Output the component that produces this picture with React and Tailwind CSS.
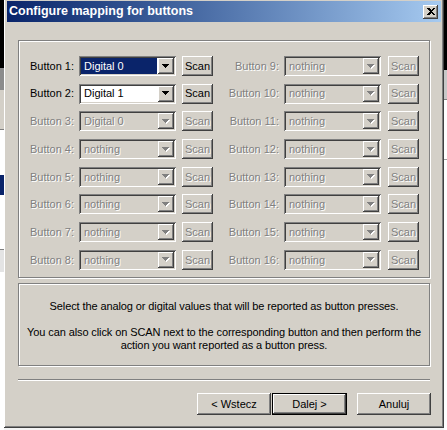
import React from "react";

// classic 3D edges
const raised =
  "shadow-[inset_-1px_-1px_0_#404040,inset_1px_1px_0_#ffffff,inset_-2px_-2px_0_#808080,inset_2px_2px_0_#d4d0c8]";
const sunken =
  "shadow-[inset_1px_1px_0_#808080,inset_-1px_-1px_0_#ffffff,inset_2px_2px_0_#404040,inset_-2px_-2px_0_#d4d0c8]";
const etched = "border border-[#808080] shadow-[inset_1px_1px_0_#ffffff,1px_1px_0_#ffffff]";
const grayText = "text-[#808080] [text-shadow:1px_1px_0_#ffffff]";

const left = [
  { n: 1, v: "Digital 0", on: true, sel: true },
  { n: 2, v: "Digital 1", on: true },
  { n: 3, v: "Digital 0" },
  { n: 4, v: "nothing" },
  { n: 5, v: "nothing" },
  { n: 6, v: "nothing" },
  { n: 7, v: "nothing" },
  { n: 8, v: "nothing" },
];
const right = [9, 10, 11, 12, 13, 14, 15, 16].map((n) => ({ n, v: "nothing" }));

const Arrow = ({ on }) => (
  <svg width="8" height="5" viewBox="0 0 8 5" shapeRendering="crispEdges" className="overflow-visible">
    {!on && <polygon points="1,1 8,1 4.5,5" fill="#ffffff" />}
    <polygon points="0,0 7,0 3.5,4" fill={on ? "#000000" : "#808080"} />
  </svg>
);

const Combo = ({ value, on, sel }) => (
  <div className={`flex h-[20px] w-[97px] p-[2px] ${sunken} ${on ? "bg-white" : "bg-[#d4d0c8]"}`}>
    <div className="flex-1 min-w-0 pr-[1px]">
      <div
        className={`h-full flex items-center pl-[3px] whitespace-nowrap ${
          sel ? "bg-[#0a246a] text-white" : on ? "text-black" : grayText
        }`}
      >
        {value}
      </div>
    </div>
    <div className={`w-[16px] h-full flex items-center justify-center bg-[#d4d0c8] ${raised}`}>
      <Arrow on={on} />
    </div>
  </div>
);

const ScanBtn = ({ on }) => (
  <div
    className={`h-[20px] w-[31px] flex items-center justify-center bg-[#d4d0c8] ${raised} ${
      on ? "text-black" : grayText
    }`}
  >
    Scan
  </div>
);

const Row = ({ item, labelW, gap2 }) => (
  <div className="flex items-center h-[20px]">
    <div className={`${labelW} text-right pr-[1px] whitespace-nowrap ${item.on ? "text-black" : grayText}`}>
      Button {item.n}:
    </div>
    <div className="ml-[4px]">
      <Combo value={item.v} on={item.on} sel={item.sel} />
    </div>
    <div className={gap2}>
      <ScanBtn on={item.on} />
    </div>
  </div>
);

const WinButton = ({ children, isDefault, w }) =>
  isDefault ? (
    <div className={`${w} h-[22px] border border-black`}>
      <div className={`h-full flex items-center justify-center bg-[#d4d0c8] ${raised}`}>{children}</div>
    </div>
  ) : (
    <div className={`${w} h-[22px] flex items-center justify-center bg-[#d4d0c8] ${raised}`}>{children}</div>
  );

export default function App() {
  return (
    <div className="w-[447px] h-[430px] overflow-hidden flex bg-[#f4f4f4] font-['Liberation_Sans',Arial,sans-serif] text-[11px] text-black">
      {/* background window, left side */}
      <div className="w-[4px] flex flex-col shrink-0">
        <div className="h-[68px] bg-black" />
        <div className="h-[22px] bg-[#8c8c8c]" />
        <div className="h-[40px] bg-[#d4d0c8] border-b border-[#808080]" />
        <div className="h-[45px] bg-white" />
        <div className="h-[20px] bg-[#0a246a]" />
        <div className="h-[55px] bg-white border-b border-[#808080]" />
        <div className="h-[22px] bg-[#e4e4e4]" />
        <div className="flex-1 bg-white" />
      </div>

      {/* dialog */}
      <div className={`w-[440px] h-[430px] -mt-[2px] shrink-0 p-[3px] bg-[#d4d0c8] flex flex-col ${raised}`}>
        <div className="h-[21px] flex items-center justify-between bg-linear-to-r from-[#0a246a] to-[#a6caf0]">
          <span className="pl-[2px] text-white font-bold text-[12.5px] whitespace-nowrap">
            Configure mapping for buttons
          </span>
          <div className={`mr-[3px] w-[15px] h-[14px] flex items-center justify-center bg-[#d4d0c8] ${raised}`}>
            <svg width="8" height="7" viewBox="0 0 8 7" shapeRendering="crispEdges">
              <path d="M0 0h2l2 2 2-2h2L5 3.5 8 7H6L4 5 2 7H0l3-3.5z" fill="#000" />
            </svg>
          </div>
        </div>

        <div className="flex-1 flex flex-col px-[11px] pt-[18px]">
          {/* mapping grid */}
          <div className={`h-[238px] pt-[15px] flex ${etched}`}>
            <div className="flex flex-col gap-[7.7px]">
              {left.map((it) => (
                <Row key={it.n} item={it} labelW="w-[56px]" gap2="ml-[6px]" />
              ))}
            </div>
            <div className="flex flex-col gap-[7.7px]">
              {right.map((it) => (
                <Row key={it.n} item={it} labelW="w-[67px]" gap2="ml-[7px]" />
              ))}
            </div>
          </div>

          {/* help text */}
          <div className={`mt-[5px] h-[83px] pt-[16px] text-center leading-[13px] tracking-[-0.1px] ${etched}`}>
            <p className="whitespace-nowrap">
              Select the analog or digital values that will be reported as button presses.
            </p>
            <p className="mt-[13px] whitespace-nowrap">
              You can also click on SCAN next to the corresponding button and then perform the
              <br />
              action you want reported as a button press.
            </p>
          </div>

          <div className="mt-[13px] h-[2px] border-t border-[#808080] border-b border-b-white" />

          <div className="mt-[12px] flex justify-end -mr-[1px]">
            <WinButton w="w-[74px]">&lt; Wstecz</WinButton>
            <div className="ml-[1px]">
              <WinButton w="w-[75px]" isDefault>
                Dalej &gt;
              </WinButton>
            </div>
            <div className="ml-[10px]">
              <WinButton w="w-[74px]">Anuluj</WinButton>
            </div>
          </div>
        </div>
      </div>

      {/* background window, right side */}
      <div className="w-[3px] flex flex-col shrink-0">
        <div className="h-[70px] bg-black" />
        <div className="h-[30px] bg-[#c8c8c8] border-b border-[#808080]" />
        <div className="h-[60px] bg-white border-b border-[#a0a0a0]" />
        <div className="flex-1 bg-white" />
      </div>
    </div>
  );
}
